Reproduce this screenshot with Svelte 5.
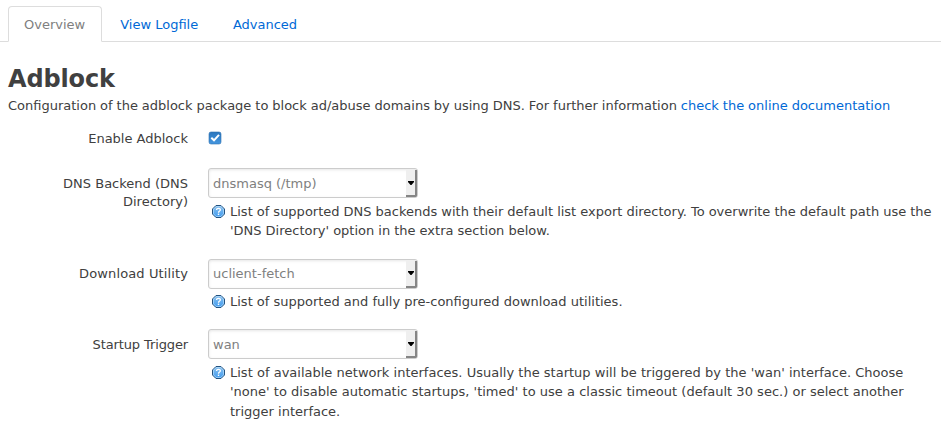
<script>
  const tabs = ['Overview', 'View Logfile', 'Advanced'];
  const options = [
    {
      label: 'DNS Backend (DNS Directory)',
      tracking: 0,
      wordGap: -0.08,
      value: 'dnsmasq (/tmp)',
      help: "List of supported DNS backends with their default list export directory. To overwrite the default path use the 'DNS Directory' option in the extra section below."
    },
    {
      label: 'Download Utility',
      tracking: 0.12,
      wordGap: 0,
      value: 'uclient-fetch',
      help: 'List of supported and fully pre-configured download utilities.'
    },
    {
      label: 'Startup Trigger',
      tracking: -0.12,
      wordGap: 0.08,
      value: 'wan',
      help: "List of available network interfaces. Usually the startup will be triggered by the 'wan' interface. Choose 'none' to disable automatic startups, 'timed' to use a classic timeout (default 30 sec.) or select another trigger interface."
    }
  ];
  let active = $state('Overview');
  let enabled = $state(true);
</script>

<main>
  <nav>
    {#each tabs as tab}
      <button class="tab" class:active={active === tab} onclick={() => (active = tab)}>{tab}</button>
    {/each}
  </nav>

  <h2>Adblock</h2>
  <p class="intro">
    Configuration of the adblock package to block ad/abuse domains by using DNS. For further information <a href="#docs">check the online documentation</a>
  </p>

  <div class="row first">
    <div class="label">Enable Adblock</div>
    <button class="check" role="checkbox" aria-checked={enabled} aria-label="Enable Adblock" onclick={() => (enabled = !enabled)}>
      <svg width="14" height="14" viewBox="0 0 14 14">
        <defs>
          <linearGradient id="check-fill" x1="0" y1="0" x2="0" y2="1">
            <stop offset="0" stop-color="#2b76bd" />
            <stop offset="1" stop-color="#4597e0" />
          </linearGradient>
        </defs>
        <rect x="1" y="1" width="12" height="12" rx="2" fill="url(#check-fill)" stroke="#2c6fae" stroke-width=".6" />
        {#if enabled}
          <path d="M3.3 6.7 6 9.3 11 3.8" fill="none" stroke="#fff" stroke-width="2" />
        {/if}
      </svg>
    </button>
  </div>

  {#each options as option}
    <div class="row">
      <div class="label" style:letter-spacing={option.tracking ? `${option.tracking}px` : null}>{option.label}</div>
      <div class="field">
        <div class="select">
          <span>{option.value}</span>
          <div class="arrow">
            <svg width="6" height="4" viewBox="0 0 6 4"><path d="M0 0H6V1L3.5 4H2.5L0 1Z" fill="#000" /></svg>
          </div>
        </div>
        <div class="help" style:word-spacing={`${option.wordGap}px`}>
          <svg width="13" height="13" viewBox="0 0 13 13">
            <defs>
              <linearGradient id="help-fill" x1="0" y1="0" x2="0" y2="1">
                <stop offset="0" stop-color="#8fc3ee" />
                <stop offset="1" stop-color="#3d9af0" />
              </linearGradient>
            </defs>
            <path d="M4 .5H9L12.5 4V9L9 12.5H4L.5 9V4Z" fill="url(#help-fill)" stroke="#24527f" />
            <path d="M4.2 1.5H8.8L11.5 4.2V8.8L8.8 11.5H4.2L1.5 8.8V4.2Z" fill="none" stroke="#b5dcfa" stroke-width=".7" />
            <path d="M4.6 5V4.5Q4.6 3.3 6.4 3.3Q8.4 3.3 8.4 4.8Q8.4 5.6 7.3 6.2Q6.5 6.7 6.5 7.7" fill="none" stroke="#fff" stroke-width="1.3" />
            <rect x="5.8" y="8.6" width="1.4" height="1.4" fill="#fff" />
          </svg>
          <span>{option.help}</span>
        </div>
      </div>
    </div>
  {/each}
</main>

<style>
  :global(body) {
    background: #fff;
  }
  main {
    box-sizing: border-box;
    height: 436px;
    overflow: hidden;
    padding-top: 6px;
    font: 13px/18px "DejaVu Sans", sans-serif;
    color: #404040;
  }
  nav {
    display: flex;
    height: 36px;
    box-sizing: border-box;
    padding-left: 8px;
    border-bottom: 1px solid #ddd;
  }
  button {
    font: inherit;
    background: none;
    padding: 0;
    margin: 0;
    border: 0;
    cursor: pointer;
  }
  .tab {
    height: 36px;
    box-sizing: border-box;
    padding: 1px 15.7px 0 15px;
    margin-right: 2px;
    border: 1px solid transparent;
    border-radius: 4px 4px 0 0;
    line-height: 34px;
    color: #0069d6;
    white-space: nowrap;
  }
  .tab.active {
    padding-right: 16px;
    color: #808080;
    background: #fff;
    border-color: #ddd;
    border-bottom-color: #fff;
  }
  h2 {
    margin: 19px 0 0 8px;
    font-size: 24px;
    line-height: 36px;
    font-weight: bold;
    letter-spacing: -0.15px;
  }
  .intro {
    margin: 0 0 0 8px;
    white-space: nowrap;
    word-spacing: -0.2px;
  }
  a {
    color: #0069d6;
    text-decoration: none;
  }
  .row {
    display: flex;
    align-items: flex-start;
    padding-bottom: 17.8px;
  }
  .row.first {
    padding: 15px 0 20.4px;
  }
  .label {
    width: 130px;
    flex: none;
    margin-left: 58px;
    padding-top: 6.5px;
    margin-right: 20px;
    text-align: right;
  }
  .first .label {
    padding-top: 0;
  }
  .check {
    height: 16px;
    display: flex;
    align-items: center;
  }
  .field {
    width: 730px;
    flex: none;
  }
  .select {
    display: flex;
    justify-content: space-between;
    align-items: stretch;
    box-sizing: border-box;
    width: 210px;
    height: 30px;
    border: 1px solid #ccc;
    border-radius: 3px;
    padding-left: 4px;
    line-height: 29px;
    color: #808080;
    box-shadow: inset 0 1px 3px rgba(0, 0, 0, 0.1);
  }
  .select span {
    margin-top: -0.3px;
  }
  .arrow {
    display: flex;
    align-items: center;
    justify-content: flex-end;
    box-sizing: border-box;
    width: 11px;
    margin: 1px 0 0;
    padding-right: 1px;
    background: #efefef;
    border-right: 2px solid #858585;
    border-bottom: 2px solid #858585;
    border-bottom-right-radius: 2px;
  }
  .help {
    display: flex;
    align-items: flex-start;
    gap: 4px;
    padding: 3.4px 0 0 4px;
    line-height: 19.5px;
  }
  .help svg {
    flex: none;
    margin: 3px 1px 0 0;
  }
</style>
